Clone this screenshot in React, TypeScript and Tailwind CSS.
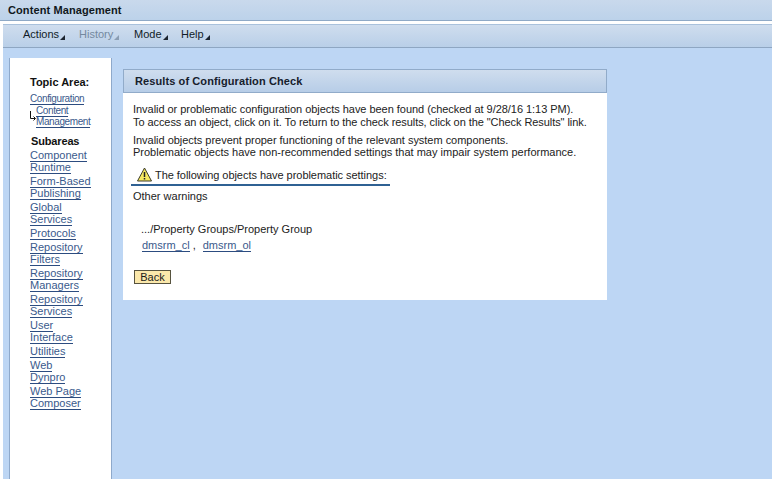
const subareas: string[][] = [
  ["Component", "Runtime"],
  ["Form-Based", "Publishing"],
  ["Global", "Services"],
  ["Protocols"],
  ["Repository", "Filters"],
  ["Repository", "Managers"],
  ["Repository", "Services"],
  ["User", "Interface"],
  ["Utilities"],
  ["Web", "Dynpro"],
  ["Web Page", "Composer"],
];

function Arrow({ muted }: { muted?: boolean }) {
  return (
    <svg width="5" height="5" viewBox="0 0 5 5" className="ml-[1px] mt-[8px] shrink-0">
      <path d="M5 0V5H0Z" fill={muted ? "#8a9db3" : "#1c2530"} />
    </svg>
  );
}

function MenuItem({ label, muted, className }: { label: string; muted?: boolean; className: string }) {
  return (
    <div className={`flex items-center ${className}`}>
      <span className={`text-[11px] leading-[14px] ${muted ? "text-[#74899f]" : "text-[#111c28]"}`}>{label}</span>
      <Arrow muted={muted} />
    </div>
  );
}

function Link({ children }: { children: string }) {
  return <span className="border-b border-[#2c4c80] text-[#3a5a8c]">{children}</span>;
}

export default function App() {
  return (
    <div className="flex h-[479px] w-[772px] flex-col overflow-hidden bg-white font-['Liberation_Sans',Arial,sans-serif]">
      <header className="flex h-[21px] items-center border-b border-[#8fa9c6] bg-gradient-to-b from-[#c9d9ec] to-[#bcd2ea] pl-[8px] text-[11px] font-bold tracking-[0.1px] text-[#101820]">
        Content Management
      </header>
      <div className="mt-[3px] ml-[3px] flex min-h-0 flex-1 flex-col border-t border-[#a9c1dc]">
        <nav className="flex h-[23px] items-center border-b border-[#8ea6c2] bg-gradient-to-b from-[#cfddee] to-[#b9cfe8] pb-[5px] pl-[20px]">
          <MenuItem label="Actions" className="w-[56px]" />
          <MenuItem label="History" muted className="w-[55px]" />
          <MenuItem label="Mode" className="w-[47px]" />
          <MenuItem label="Help" className="w-[40px]" />
        </nav>
        <div className="flex min-h-0 flex-1 items-start gap-[11px] bg-[#bdd6f4] pt-[10px] pl-[6px]">
          <aside className="h-[421px] w-[103px] shrink-0 border-x border-[#8ea9cb] bg-white pt-[17px] pl-[20px] text-[#111]">
            <div className="text-[11px] leading-[14px] font-bold">Topic Area:</div>
            <div className="mt-[3px] text-[10px] leading-[13px] tracking-[-0.4px]">
              <div><Link>Configuration</Link></div>
              <div className="relative pl-[6px]">
                <svg width="7" height="10" viewBox="0 0 7 10" className="absolute top-[6px] left-0">
                  <path d="M0.5 0V7.5H5M3.5 5.5L5.5 7.5L3.5 9.5" fill="none" stroke="#111" />
                </svg>
                <div className="leading-[11px]"><Link>Content</Link></div>
                <div className="leading-[11px]"><Link>Management</Link></div>
              </div>
            </div>
            <div className="mt-[7px] ml-[1px] text-[11px] leading-[14px] font-bold tracking-[-0.15px]">Subareas</div>
            <div className="mt-[1px] flex flex-col gap-[2px] text-[11px] leading-[12px]">
              {subareas.map((lines, i) => (
                <div key={i}>
                  {lines.map((line) => (
                    <div key={line}><Link>{line}</Link></div>
                  ))}
                </div>
              ))}
            </div>
          </aside>
          <main className="mt-[11px] h-[231px] w-[484px] shrink-0 bg-white">
            <div className="flex h-[24px] items-center border border-[#91abc9] bg-gradient-to-b from-[#cfddee] to-[#b7cde7] pl-[11px] text-[11px] font-bold tracking-[0.1px] text-[#16202c]">
              Results of Configuration Check
            </div>
            <div className="px-[10px] pt-[10px] text-[11px] leading-[13px] text-[#222]">
              <p className="tracking-[-0.04px]">Invalid or problematic configuration objects have been found (checked at 9/28/16 1:13 PM).</p>
              <p className="tracking-[-0.07px]">To access an object, click on it. To return to the check results, click on the "Check Results" link.</p>
              <p className="mt-[5px] leading-[12px] tracking-[-0.025px]">Invalid objects prevent proper functioning of the relevant system components.</p>
              <p>Problematic objects have non-recommended settings that may impair system performance.</p>
              <div className="mt-[6px] -ml-[2px] flex h-[21px] w-[259px] items-center gap-[3px] border-b-2 border-[#2f6193] pt-[2px] pl-[6px]">
                <svg width="15" height="15" viewBox="0 0 15 15" className="-mt-[2px] shrink-0">
                  <path d="M7.5 1L14.5 14H0.5Z" fill="#f6e860" stroke="#3b3b2a" strokeLinejoin="round" />
                  <path d="M7.5 5V10M7.5 11V12.5" stroke="#222" strokeWidth="1.5" />
                </svg>
                <span className="tracking-[-0.04px]">The following objects have problematic settings:</span>
              </div>
              <p className="mt-[4px]">Other warnings</p>
              <p className="mt-[20px] pl-[8px]">.../Property Groups/Property Group</p>
              <p className="mt-[3px] pl-[9px]"><Link>dmsrm_cl</Link><span className="ml-[3px]">,</span><span className="ml-[7px]"><Link>dmsrm_ol</Link></span></p>
              <button className="mt-[18px] ml-[1px] block h-[14px] w-[37px] border border-[#57533f] bg-[#fbe8ab] text-center text-[11px] leading-[12px] text-[#1a1a1a]">
                Back
              </button>
            </div>
          </main>
        </div>
      </div>
    </div>
  );
}
